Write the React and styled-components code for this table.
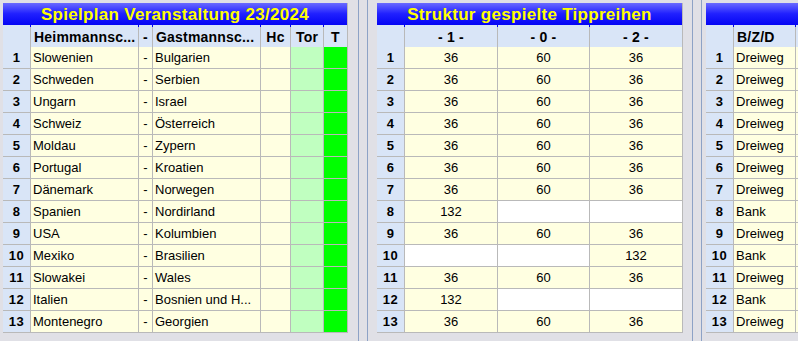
import styled, { createGlobalStyle } from 'styled-components';

const GlobalStyle = createGlobalStyle`
    html, body {
        margin: 0;
        padding: 0;
        background: #e0e0e6;
    }
    body {
        font-family: "Liberation Sans", Arial, sans-serif;
        font-size: 13px;
    }
`;

const spiele = [
    ['Slowenien', 'Bulgarien'],
    ['Schweden', 'Serbien'],
    ['Ungarn', 'Israel'],
    ['Schweiz', 'Österreich'],
    ['Moldau', 'Zypern'],
    ['Portugal', 'Kroatien'],
    ['Dänemark', 'Norwegen'],
    ['Spanien', 'Nordirland'],
    ['USA', 'Kolumbien'],
    ['Mexiko', 'Brasilien'],
    ['Slowakei', 'Wales'],
    ['Italien', 'Bosnien und H...'],
    ['Montenegro', 'Georgien'],
];

// null = leere (weisse) Zelle
const full = ['36', '60', '36'];
const struktur = [
    full, full, full, full, full, full, full,
    ['132', null, null],
    full,
    [null, null, '132'],
    full,
    ['132', null, null],
    full,
];

const App = () => {
    return (
        <>
            <GlobalStyle />
            <Page>
                <Panel $cols="27px 107px 13px 107px 29px 32px 23px">
                    <Title>Spielplan Veranstaltung 23/2024</Title>
                    <HeadCell />
                    <HeadCell $align="left">Heimmannsc...</HeadCell>
                    <HeadCell>-</HeadCell>
                    <HeadCell $align="left">Gastmannsc...</HeadCell>
                    <HeadCell>Hc</HeadCell>
                    <HeadCell>Tor</HeadCell>
                    <HeadCell>T</HeadCell>
                    {spiele.map(([heim, gast], i) => (
                        <Row key={i}>
                            <RowNum>{i + 1}</RowNum>
                            <Cell>{heim}</Cell>
                            <Cell $align="center">-</Cell>
                            <Cell>{gast}</Cell>
                            <Cell />
                            <Cell $bg="#c0ffc0" />
                            <Cell $bg="#00ff00" />
                        </Row>
                    ))}
                </Panel>

                <Splitter $before={10} $after={9} />

                <Panel $cols="27px 92px 91px 92px">
                    <Title>Struktur gespielte Tippreihen</Title>
                    <HeadCell />
                    <HeadCell>- 1 -</HeadCell>
                    <HeadCell>- 0 -</HeadCell>
                    <HeadCell>- 2 -</HeadCell>
                    {struktur.map((row, i) => (
                        <Row key={i}>
                            <RowNum>{i + 1}</RowNum>
                            {row.map((v, j) => (
                                <Cell key={j} $align="center" $bg={v ? undefined : '#ffffff'}>
                                    {v}
                                </Cell>
                            ))}
                        </Row>
                    ))}
                </Panel>

                <Splitter $before={9} $after={4} />

                <Panel $cols="27px 61px 60px">
                    <Title />
                    <HeadCell />
                    <HeadCell $align="left">B/Z/D</HeadCell>
                    <HeadCell />
                    {struktur.map((row, i) => (
                        <Row key={i}>
                            <RowNum>{i + 1}</RowNum>
                            <Cell>{row[1] === null ? 'Bank' : 'Dreiweg'}</Cell>
                            <Cell />
                        </Row>
                    ))}
                </Panel>
            </Page>
        </>
    );
};

const Page = styled.div`
    display: flex;
    align-items: stretch;
    width: 798px;
    height: 341px;
    padding-left: 3px;
    box-sizing: border-box;
    background: #e0e0e6;
    overflow: hidden;
`;

const Panel = styled.div`
    display: grid;
    grid-template-columns: ${p => p.$cols};
    grid-auto-rows: 21px;
    gap: 1px;
    align-self: flex-start;
    margin-top: 3px;
    padding: 0 1px 1px 0;
    background: #b9b9b9;
    flex-shrink: 0;
`;

const Row = styled.div`
    display: contents;
`;

const Title = styled.div`
    grid-column: 1 / -1;
    height: 24px;
    display: flex;
    align-items: center;
    justify-content: center;
    background: linear-gradient(to bottom, #6a6aff 0%, #2020ff 45%, #0000f2 100%);
    color: #ffff00;
    font-weight: bold;
    font-size: 17px;
    letter-spacing: 0.3px;
    white-space: nowrap;
    overflow: hidden;
`;

const HeadCell = styled.div`
    height: 24px;
    display: flex;
    align-items: center;
    justify-content: ${p => (p.$align === 'left' ? 'flex-start' : 'center')};
    padding-left: ${p => (p.$align === 'left' ? '3px' : '0')};
    background: #d9e5f7;
    color: #000;
    font-weight: bold;
    font-size: 14px;
    letter-spacing: 0.2px;
    white-space: nowrap;
    overflow: hidden;
`;

const RowNum = styled.div`
    display: flex;
    align-items: center;
    justify-content: center;
    background: #d9e5f7;
    font-weight: bold;
    font-size: 13px;
    letter-spacing: 0.5px;
`;

const Cell = styled.div`
    display: flex;
    align-items: center;
    justify-content: ${p => (p.$align === 'center' ? 'center' : 'flex-start')};
    padding-left: ${p => (p.$align === 'center' ? '0' : '2px')};
    background: ${p => p.$bg || '#ffffe1'};
    color: #000;
    font-size: 13px;
    white-space: nowrap;
    overflow: hidden;
`;

const Splitter = styled.div`
    display: flex;
    flex-shrink: 0;
    gap: 8px;
    padding-left: ${p => p.$before}px;
    padding-right: ${p => p.$after}px;

    &::before,
    &::after {
        content: '';
        width: 1px;
        background: #8da2c6;
    }
`;

export default App;
